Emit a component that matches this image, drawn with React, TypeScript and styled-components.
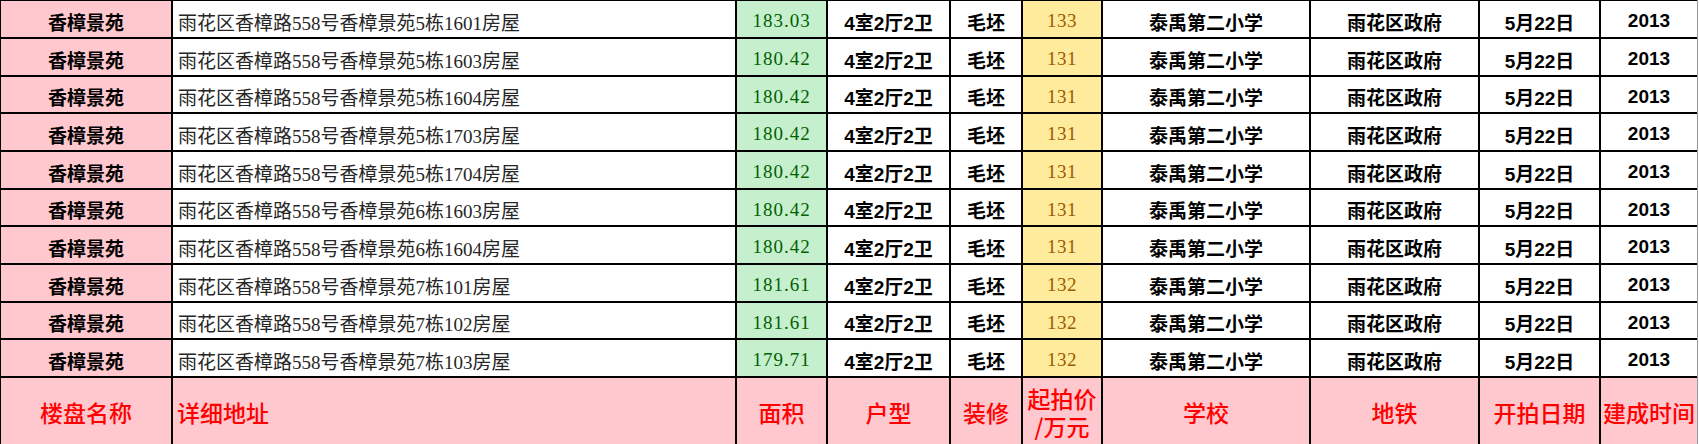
import React from "react";
import styled, { createGlobalStyle, css } from "styled-components";

const GlobalStyle = createGlobalStyle`
  html, body {
    margin: 0;
    padding: 0;
    background: #ffffff;
    overflow: hidden;
  }
  #root {
    width: 1699px;
    height: 444px;
  }
`;

const COLS = [170, 562, 89, 121, 70, 78, 206, 167, 119, 96];
const ROWS = [36, 36, 35, 36, 36, 35, 36, 36, 35, 36];

const PINK = "#ffc7ce";
const GREEN = "#c6efce";
const YELLOW = "#ffeb9c";

const Sheet = styled.div`
  display: grid;
  grid-template-columns: ${COLS.map((c) => `${c}px`).join(" ")};
  grid-template-rows: ${ROWS.map((r) => `${r}px`).join(" ")} 66px;
  gap: 2px;
  padding: 1px 0 0 1px;
  background: #000000;
  border-right: 1px solid #9a9a9a;
  width: max-content;
`;

const cellBase = css`
  display: flex;
  align-items: center;
  overflow: hidden;
  white-space: nowrap;
  box-sizing: border-box;
  padding-top: 4px;
`;

const NameCell = styled.div`
  ${cellBase};
  justify-content: center;
  background: ${PINK};
  color: #000;
  font-family: "Noto Sans CJK SC", sans-serif;
  font-weight: 700;
  font-size: 19px;
`;

const AddressCell = styled.div`
  ${cellBase};
  justify-content: flex-start;
  padding-left: 5px;
  background: #ffffff;
  color: #262626;
  font-family: "Liberation Serif", "Noto Sans CJK SC", serif;
  font-size: 19px;
`;

const ValueCell = styled.div<{ $tone: "green" | "yellow" }>`
  ${cellBase};
  justify-content: center;
  background: ${(p) => (p.$tone === "green" ? GREEN : YELLOW)};
  color: ${(p) => (p.$tone === "green" ? "#006100" : "#9c5a00")};
  font-family: "Liberation Serif", serif;
  font-size: 19px;
  letter-spacing: ${(p) => (p.$tone === "green" ? "1px" : "0.5px")};
`;

const TextCell = styled.div`
  ${cellBase};
  justify-content: center;
  background: #ffffff;
  color: #000;
  font-family: "Liberation Sans", "Noto Sans CJK SC", sans-serif;
  font-weight: 700;
  font-size: 19px;
`;

const HeadCell = styled.div<{ $align?: "left" | "center" }>`
  display: flex;
  flex-direction: column;
  align-items: ${(p) => (p.$align === "left" ? "flex-start" : "center")};
  justify-content: center;
  padding-left: ${(p) => (p.$align === "left" ? "4px" : "0")};
  padding-top: 2px;
  box-sizing: border-box;
  overflow: hidden;
  white-space: nowrap;
  background: ${PINK};
  color: #ff0000;
  font-family: "Noto Sans CJK SC", sans-serif;
  font-weight: 500;
  font-size: 23px;
  line-height: 28px;
`;

type Row = { addr: string; area: string; price: string };

const rows: Row[] = [
  { addr: "5栋1601", area: "183.03", price: "133" },
  { addr: "5栋1603", area: "180.42", price: "131" },
  { addr: "5栋1604", area: "180.42", price: "131" },
  { addr: "5栋1703", area: "180.42", price: "131" },
  { addr: "5栋1704", area: "180.42", price: "131" },
  { addr: "6栋1603", area: "180.42", price: "131" },
  { addr: "6栋1604", area: "180.42", price: "131" },
  { addr: "7栋101", area: "181.61", price: "132" },
  { addr: "7栋102", area: "181.61", price: "132" },
  { addr: "7栋103", area: "179.71", price: "132" },
];

export default function App() {
  return (
    <>
      <GlobalStyle />
      <Sheet>
        {rows.map((r, i) => (
          <React.Fragment key={i}>
            <NameCell>香樟景苑</NameCell>
            <AddressCell>雨花区香樟路558号香樟景苑{r.addr}房屋</AddressCell>
            <ValueCell $tone="green">{r.area}</ValueCell>
            <TextCell>4室2厅2卫</TextCell>
            <TextCell>毛坯</TextCell>
            <ValueCell $tone="yellow">{r.price}</ValueCell>
            <TextCell>泰禹第二小学</TextCell>
            <TextCell>雨花区政府</TextCell>
            <TextCell>5月22日</TextCell>
            <TextCell>2013</TextCell>
          </React.Fragment>
        ))}
        <HeadCell>楼盘名称</HeadCell>
        <HeadCell $align="left">详细地址</HeadCell>
        <HeadCell>面积</HeadCell>
        <HeadCell>户型</HeadCell>
        <HeadCell>装修</HeadCell>
        <HeadCell>
          <span>起拍价</span>
          <span>/万元</span>
        </HeadCell>
        <HeadCell>学校</HeadCell>
        <HeadCell>地铁</HeadCell>
        <HeadCell>开拍日期</HeadCell>
        <HeadCell>建成时间</HeadCell>
      </Sheet>
    </>
  );
}
